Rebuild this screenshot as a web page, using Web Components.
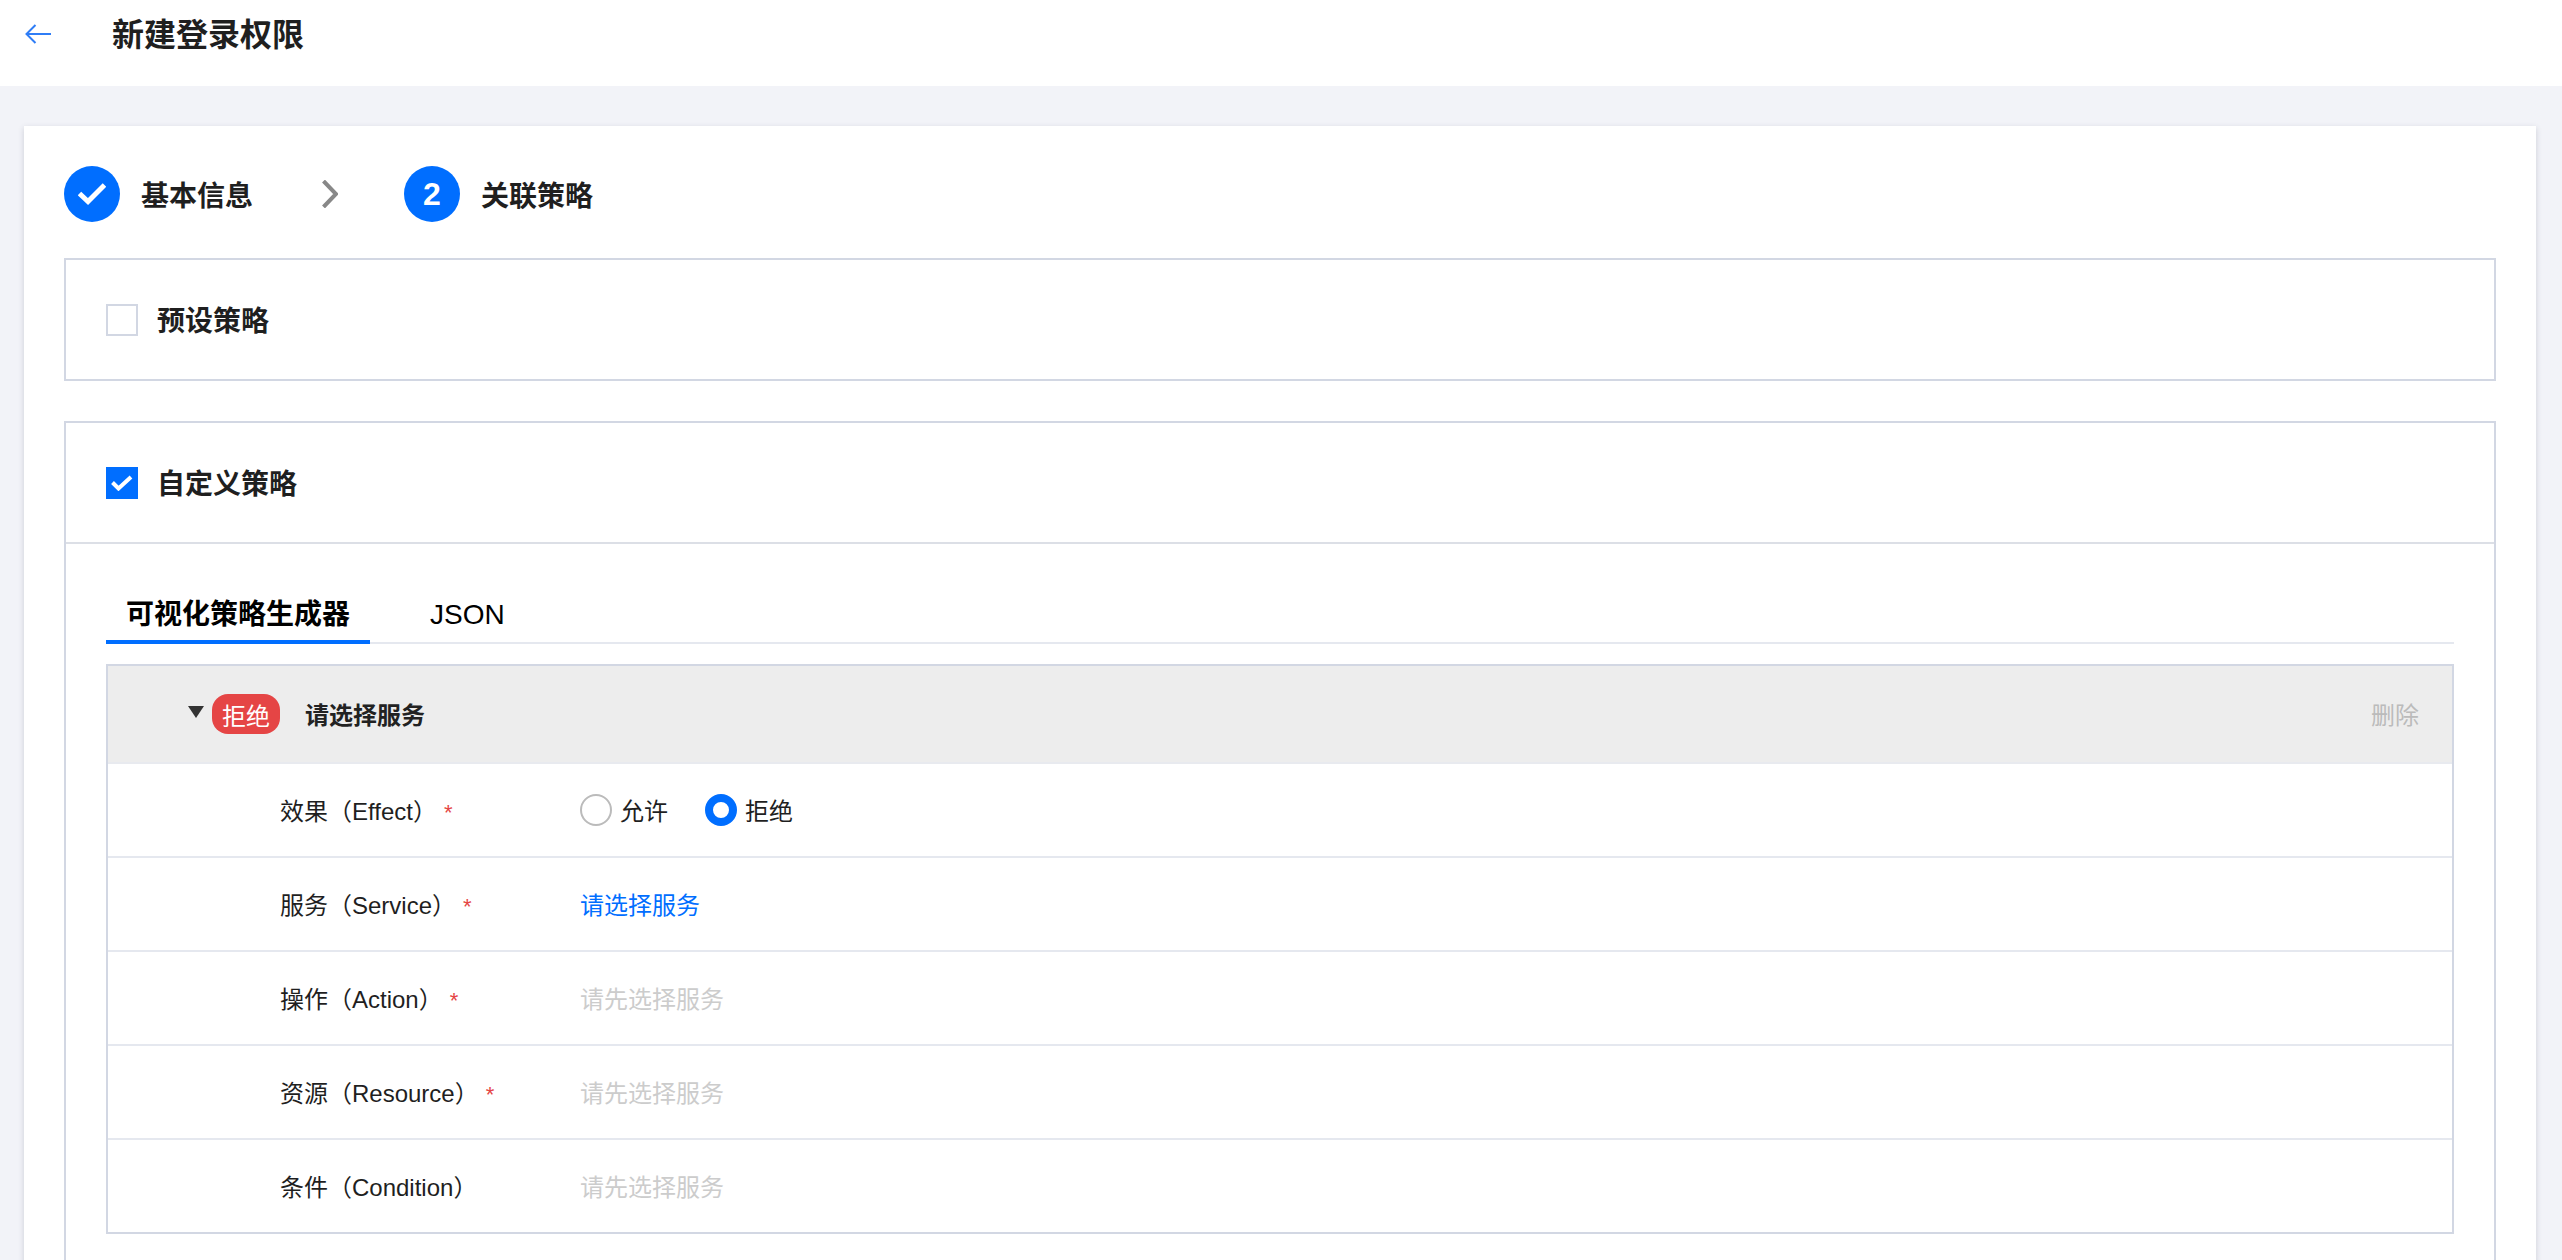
<!DOCTYPE html>
<html lang="zh-CN">
<head>
<meta charset="utf-8">
<title>新建登录权限</title>
<style>
  html, body { margin: 0; height: 1260px; overflow: hidden; background: #f2f3f8; }
  body { font-family: "Liberation Sans", "Noto Sans CJK SC", sans-serif; color: #1f1f1f; }
</style>
</head>
<body>
<page-header>新建登录权限</page-header>
<page-card>
  <step-bar></step-bar>
  <policy-box label="预设策略"></policy-box>
  <policy-box label="自定义策略" checked>
    <tab-bar></tab-bar>
    <rule-panel>
      <rule-row label="效果（Effect）" required>
        <radio-option>允许</radio-option>
        <radio-option checked>拒绝</radio-option>
      </rule-row>
      <rule-row label="服务（Service）" required><span style="color:#006eff">请选择服务</span></rule-row>
      <rule-row label="操作（Action）" required><span style="color:#ccc">请先选择服务</span></rule-row>
      <rule-row label="资源（Resource）" required><span style="color:#ccc">请先选择服务</span></rule-row>
      <rule-row label="条件（Condition）" last><span style="color:#ccc">请先选择服务</span></rule-row>
    </rule-panel>
  </policy-box>
</page-card>

<script>
class PageHeader extends HTMLElement {
  connectedCallback() {
    this.attachShadow({ mode: 'open' });
    this.shadowRoot.innerHTML = `
      <style>
        :host { display: flex; align-items: flex-start; height: 86px; background: #fff; box-sizing: border-box; padding: 12px 0 0 25px; }
        svg { width: 26px; height: 20px; margin-top: 12px; flex: none; }
        .title { margin-left: 61px; font-size: 32px; line-height: 46px; font-weight: 700; color: #1f1f1f; }
      </style>
      <svg viewBox="0 0 26 20" fill="none" stroke="#2f7df6" stroke-width="2"><path d="M26 10H1.5M10.5 1L1.5 10l9 9"/></svg>
      <div class="title"><slot></slot></div>
    `;
  }
}
customElements.define('page-header', PageHeader);

class PageCard extends HTMLElement {
  connectedCallback() {
    this.attachShadow({ mode: 'open' });
    this.shadowRoot.innerHTML = `
      <style>
        :host { display: block; margin: 40px 26px 0 24px; padding: 40px 40px 0; background: #fff; box-shadow: 0 2px 6px rgba(54, 58, 80, .2); }
      </style>
      <slot></slot>
    `;
  }
}
customElements.define('page-card', PageCard);

class StepBar extends HTMLElement {
  connectedCallback() {
    this.attachShadow({ mode: 'open' });
    this.shadowRoot.innerHTML = `
      <style>
        :host { display: flex; align-items: center; height: 56px; margin-bottom: 36px; font-size: 28px; font-weight: 700; color: #1f1f1f; }
        .dot { width: 56px; height: 56px; border-radius: 50%; background: #006eff; color: #fff; display: flex; align-items: center; justify-content: center; font-size: 32px; font-weight: 700; flex: none; }
        .name { margin-left: 21px; white-space: nowrap; }
        .sep { width: 16px; height: 28px; margin: 0 66px 0 69px; flex: none; }
      </style>
      <div class="dot"><svg width="28" height="22" viewBox="0 0 28 22" fill="none" stroke="#fff" stroke-width="5"><path d="M1.5 10.5l8.5 8L26.5 2"/></svg></div>
      <div class="name">基本信息</div>
      <svg class="sep" viewBox="0 0 16 28" fill="none" stroke="#888" stroke-width="4"><path d="M1.5 1l12.5 13L1.5 27"/></svg>
      <div class="dot">2</div>
      <div class="name">关联策略</div>
    `;
  }
}
customElements.define('step-bar', StepBar);

class PolicyBox extends HTMLElement {
  connectedCallback() {
    const checked = this.hasAttribute('checked');
    this.attachShadow({ mode: 'open' });
    this.shadowRoot.innerHTML = `
      <style>
        :host { display: block; border: 2px solid #d2d7e3; margin-bottom: 40px; background: #fff; }
        .head { display: flex; align-items: center; height: 119px; padding-left: 40px; font-size: 28px; font-weight: 700; }
        .head span:last-child { margin-bottom: 2px; }
        .box { width: 32px; height: 32px; box-sizing: border-box; border: 2px solid #d2d7e3; margin-right: 19px; display: flex; align-items: center; justify-content: center; flex: none; }
        :host([checked]) .box { background: #006eff; border-color: #006eff; }
        .body { display: none; border-top: 2px solid #dcdfe6; padding: 0 40px 60px; }
        :host([checked]) .body { display: block; }
      </style>
      <div class="head">
        <span class="box">${checked ? '<svg width="22" height="16" viewBox="0 0 22 16" fill="none" stroke="#fff" stroke-width="4"><path d="M1.5 7.5l6 6L20 2"/></svg>' : ''}</span>
        <span>${this.getAttribute('label')}</span>
      </div>
      <div class="body"><slot></slot></div>
    `;
  }
}
customElements.define('policy-box', PolicyBox);

class TabBar extends HTMLElement {
  connectedCallback() {
    this.attachShadow({ mode: 'open' });
    this.shadowRoot.innerHTML = `
      <style>
        :host { display: flex; height: 100px; box-sizing: border-box; padding-top: 44px; border-bottom: 2px solid #e5e8ef; font-size: 28px; color: #000; }
        .tab { padding: 0 20px; height: 56px; line-height: 53px; box-sizing: border-box; white-space: nowrap; }
        .on { font-weight: 700; border-bottom: 4px solid #006eff; }
        .tab + .tab { margin-left: 40px; }
      </style>
      <div class="tab on">可视化策略生成器</div>
      <div class="tab">JSON</div>
    `;
  }
}
customElements.define('tab-bar', TabBar);

class RulePanel extends HTMLElement {
  connectedCallback() {
    this.attachShadow({ mode: 'open' });
    this.shadowRoot.innerHTML = `
      <style>
        :host { display: block; margin-top: 20px; border: 2px solid #d2d7e3; font-size: 24px; }
        .head { display: flex; align-items: center; height: 98px; box-sizing: border-box; padding: 0 33px 0 80px; background: #ededed; border-bottom: 2px solid #e8eaef; }
        .arrow { width: 16px; height: 12px; margin: -4px 8px 0 0; flex: none; }
        .tag { width: 68px; height: 40px; border-radius: 16px; background: #e54545; color: #fff; display: flex; align-items: center; justify-content: center; flex: none; }
        .name { margin-left: 25px; margin-bottom: 2px; font-weight: 700; color: #222; }
        .del { margin-left: auto; margin-bottom: 2px; color: #bbb; }
      </style>
      <div class="head">
        <svg class="arrow" viewBox="0 0 16 12"><path d="M0 0h16L8 12z" fill="#333"/></svg>
        <span class="tag">拒绝</span>
        <span class="name">请选择服务</span>
        <span class="del">删除</span>
      </div>
      <slot></slot>
    `;
  }
}
customElements.define('rule-panel', RulePanel);

class RuleRow extends HTMLElement {
  connectedCallback() {
    const star = this.hasAttribute('required') ? '<span class="star">*</span>' : '';
    this.attachShadow({ mode: 'open' });
    this.shadowRoot.innerHTML = `
      <style>
        :host { display: flex; align-items: center; height: 94px; box-sizing: border-box; padding-left: 172px; border-bottom: 2px solid #e5e8ef; color: #1f1f1f; }
        :host([last]) { height: 92px; border-bottom: 0; }
        .label { width: 300px; flex: none; white-space: nowrap; margin-bottom: 2px; }
        .star { color: #e54545; font-size: 22px; margin-left: 7px; }
        .value { display: flex; align-items: center; gap: 37px; margin-bottom: 2px; }
      </style>
      <div class="label">${this.getAttribute('label')}${star}</div>
      <div class="value"><slot></slot></div>
    `;
  }
}
customElements.define('rule-row', RuleRow);

class RadioOption extends HTMLElement {
  connectedCallback() {
    this.attachShadow({ mode: 'open' });
    this.shadowRoot.innerHTML = `
      <style>
        :host { display: inline-flex; align-items: center; gap: 8px; }
        .ring { width: 32px; height: 32px; box-sizing: border-box; border: 2px solid #bbb; border-radius: 50%; background: #fff; flex: none; margin-top: 2px; }
        :host([checked]) .ring { border: 8px solid #006eff; }
      </style>
      <span class="ring"></span><slot></slot>
    `;
  }
}
customElements.define('radio-option', RadioOption);
</script>
</body>
</html>
